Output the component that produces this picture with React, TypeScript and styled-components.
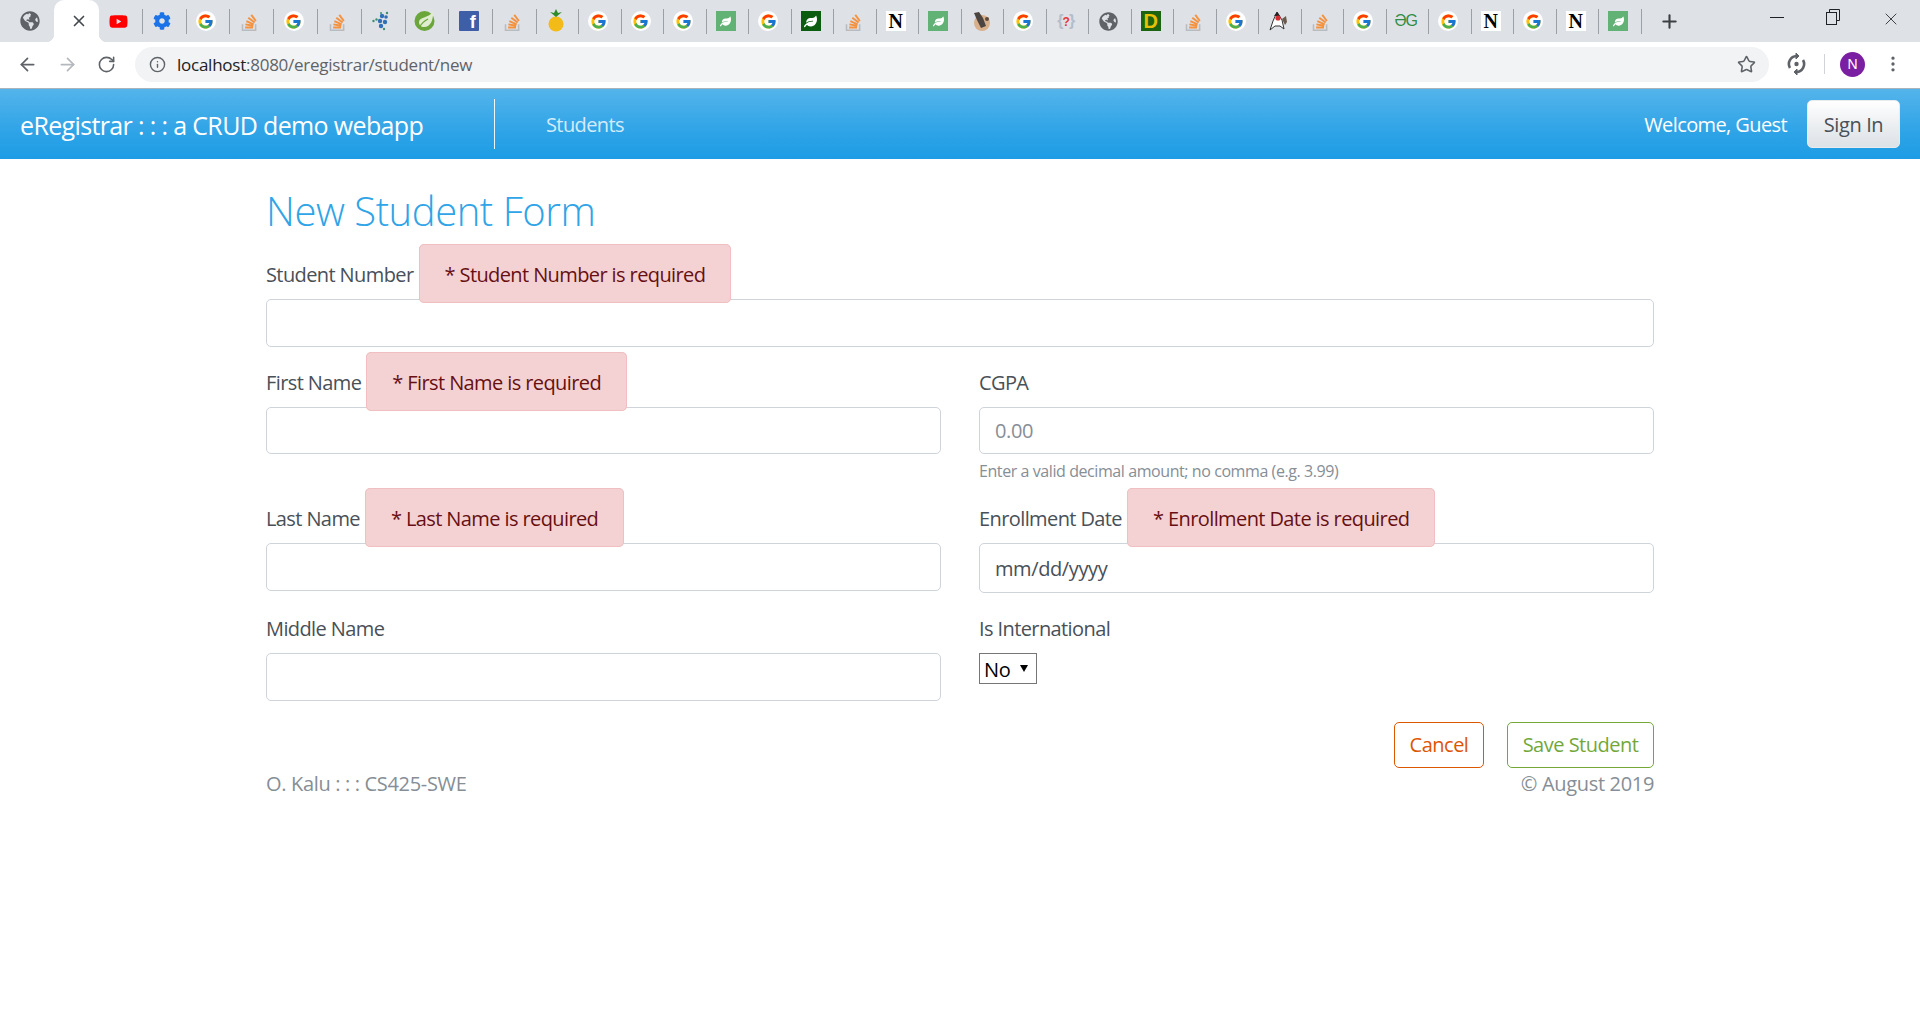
import React from 'react';
import styled, { createGlobalStyle } from 'styled-components';
import { ArrowLeft, ArrowRight, RotateCw, Info, Star, X, Plus, EllipsisVertical } from 'lucide-react';
import { FaGlobeAmericas, FaYoutube, FaCog, FaLeaf } from 'react-icons/fa';
import { FcGoogle } from 'react-icons/fc';

const GlobalStyle = createGlobalStyle`
  html, body {
    margin: 0;
    background: #fff;
  }
  body {
    font-family: "Open Sans", "Noto Sans", "Liberation Sans", sans-serif;
    color: #495057;
  }
  * {
    box-sizing: border-box;
  }
`;

const TabStrip = styled.div`
  height: 42px;
  background: #dee1e6;
  display: flex;
  align-items: center;
`;

const FirstTab = styled.div`
  width: 54px;
  height: 42px;
  padding-left: 20px;
  display: flex;
  align-items: center;
  color: #5f6368;
`;

const ActiveTab = styled.div`
  position: relative;
  width: 45px;
  height: 42px;
  padding-left: 4px;
  background: #fff;
  border-radius: 10px 10px 0 0;
  display: flex;
  align-items: center;
  justify-content: center;
  color: #45494d;

  &::before,
  &::after {
    content: '';
    position: absolute;
    bottom: 0;
    width: 8px;
    height: 8px;
  }
  &::before {
    left: -8px;
    background: radial-gradient(circle at 0 0, #dee1e6 8px, #fff 8.5px);
  }
  &::after {
    right: -8px;
    background: radial-gradient(circle at 100% 0, #dee1e6 8px, #fff 8.5px);
  }
`;

const Tab = styled.div<{ $wide?: boolean }>`
  width: ${(p) => (p.$wide ? 43.8 : 42.5)}px;
  height: 25px;
  flex: none;
  padding-right: 4px;
  display: flex;
  align-items: center;
  justify-content: center;
  border-right: 1px solid #9aa0a6;
`;

const NewTab = styled.div`
  width: 42px;
  padding-left: 14px;
  display: flex;
  justify-content: center;
  color: #3c4043;
`;

const GoogleBadge = styled.span`
  width: 20px;
  height: 20px;
  border-radius: 50%;
  background: #fff;
  display: flex;
  align-items: center;
  justify-content: center;
`;

const NotionTile = styled.span`
  width: 20px;
  height: 20px;
  background: #fff;
  color: #000;
  font: bold 20px/20px "Liberation Serif", serif;
  text-align: center;
`;

const FacebookTile = styled.span`
  width: 20px;
  height: 20px;
  padding: 2px 3px 0 0;
  background: #3f5ea8;
  border-radius: 1px;
  color: #fff;
  font: bold 18px/18px "Liberation Sans", sans-serif;
  text-align: right;
`;

const LeafTile = styled.span<{ $dark?: boolean }>`
  width: 20px;
  height: 20px;
  background: ${(p) => (p.$dark ? '#0b5c0f' : '#62b175')};
  color: #fff;
  display: flex;
  align-items: center;
  justify-content: center;
`;

const DomainTile = styled.span`
  width: 20px;
  height: 20px;
  background: #1c6410;
  color: #e8bf06;
  font: bold 20px/20px "Liberation Sans", sans-serif;
  text-align: center;
`;

const GeekMark = styled.span`
  color: #2f8d46;
  font: 16px/20px "Liberation Sans", sans-serif;
  letter-spacing: -1px;
`;

const BraceMark = styled.span`
  color: #b4bdcb;
  font: bold 16px/20px "Liberation Sans", sans-serif;
  letter-spacing: -1px;
`;

const BraceQuestion = styled.span`
  color: #e53935;
  font-size: 12px;
`;

const WindowButtons = styled.div`
  margin-left: auto;
  width: 150px;
  display: flex;
  justify-content: space-between;
  padding: 0 19px 4px 0;
  color: #202124;
`;

const Toolbar = styled.div`
  height: 47px;
  background: #fff;
  border-bottom: 1px solid #aab2ba;
  display: flex;
  align-items: center;
  padding: 0 17px 2px 17px;
  color: #5f6368;
`;

const ToolIcon = styled.span<{ $width: number }>`
  width: ${(p) => p.$width}px;
  flex: none;
  display: flex;
`;

const Omnibox = styled.div`
  flex: 1;
  height: 35px;
  padding: 0 13px 0 14px;
  background: #f1f3f4;
  border-radius: 18px;
  display: flex;
  align-items: center;
  font: 17px "Open Sans", sans-serif;
  letter-spacing: -0.25px;
`;

const UrlHost = styled.span`
  margin-left: 11px;
  color: #202124;
`;

const UrlPath = styled.span`
  flex: 1;
  color: #5f6368;
`;

const ToolbarDivider = styled.span`
  width: 1px;
  height: 20px;
  background: #d0d3d7;
  margin: 0 15px 0 18px;
`;

const Avatar = styled.span`
  width: 25px;
  height: 25px;
  border-radius: 50%;
  background: #7b1fa2;
  color: #fff;
  font: 14px/25px "Liberation Sans", sans-serif;
  text-align: center;
`;

const NavBar = styled.nav`
  height: 70px;
  padding: 0 20px;
  background: linear-gradient(#54b4eb, #2fa4e7 60%, #1d9ce5);
  display: flex;
  align-items: center;
`;

const Brand = styled.a`
  width: 474px;
  margin-top: 2px;
  color: #fff;
  font-size: 25px;
  letter-spacing: -0.65px;
`;

const NavDivider = styled.span`
  width: 1px;
  height: 50px;
  background: #fff;
  opacity: 0.9;
`;

const NavLink = styled.a`
  margin-left: 51px;
  color: rgba(255, 255, 255, 0.8);
  font-size: 20px;
  letter-spacing: -0.6px;
`;

const Welcome = styled.span`
  margin-left: auto;
  margin-right: 20px;
  color: #fff;
  font-size: 20px;
  letter-spacing: -0.6px;
`;

const SignIn = styled.button`
  width: 93px;
  height: 48px;
  border: 1px solid #e9ecef;
  border-radius: 5px;
  background: linear-gradient(#fff, #e9ecef 60%, #dde2e6);
  color: #495057;
  font: 20px "Open Sans", sans-serif;
  letter-spacing: -0.4px;
`;

const Page = styled.main`
  width: 1388px;
  margin: 0 auto;
  padding-top: 28px;
`;

const Heading = styled.h2`
  margin: 0 0 25px;
  color: #2fa4e7;
  font-size: 40px;
  font-weight: 300;
  line-height: 48px;
  letter-spacing: -0.45px;
`;

const FormGrid = styled.div`
  display: grid;
  grid-template-columns: 1fr 1fr;
  column-gap: 38px;
`;

const FormGroup = styled.div<{ $wide?: boolean }>`
  grid-column: ${(p) => (p.$wide ? '1 / span 2' : 'auto')};
  margin-bottom: 21px;
`;

const Label = styled.label`
  display: block;
  margin-bottom: 9px;
  font-size: 20px;
  line-height: 30px;
  letter-spacing: -0.6px;
`;

const ErrorTag = styled.span`
  position: relative;
  margin-left: 5px;
  padding: 16px 25px 14px;
  background: #f4d2d3;
  border: 1px solid #efbfc1;
  border-radius: 5px;
  color: #670f12;
`;

const Input = styled.input<{ $date?: boolean }>`
  display: block;
  width: 100%;
  height: ${(p) => (p.$date ? 50 : 47.5)}px;
  padding: 0 15px;
  border: 1px solid #ced4da;
  border-radius: 5px;
  background: #fff;
  color: #495057;
  font: 20px "Open Sans", sans-serif;
  letter-spacing: -0.4px;
  &::placeholder {
    color: #868e96;
  }
`;

const HelpText = styled.small`
  display: block;
  margin-top: 5px;
  color: #868e96;
  font-size: 16px;
  line-height: 24px;
  letter-spacing: -0.42px;
`;

const SelectBox = styled.div`
  position: relative;
  width: 58px;

  &::after {
    content: '';
    position: absolute;
    left: 41px;
    top: 12px;
    border-style: solid;
    border-width: 7px 4px 0;
    border-color: #000 transparent transparent;
    pointer-events: none;
  }
`;

const Select = styled.select`
  display: block;
  width: 58px;
  height: 31px;
  padding: 1px 0 0 4px;
  appearance: none;
  background: #fff;
  border: 1px solid #767676;
  border-radius: 0;
  color: #000;
  font: 20px "Open Sans", sans-serif;
  letter-spacing: -0.4px;
`;

const Actions = styled.div`
  display: flex;
  justify-content: flex-end;
  gap: 23px;
`;

const OutlineButton = styled.button<{ $color: string; $width: number }>`
  width: ${(p) => p.$width}px;
  height: 46px;
  background: #fff;
  border: 1px solid ${(p) => p.$color};
  border-radius: 5px;
  color: ${(p) => p.$color};
  font: 20px "Open Sans", sans-serif;
  letter-spacing: -0.5px;
`;

const Footer = styled.footer`
  display: flex;
  justify-content: space-between;
  margin-top: 1px;
  color: #868e96;
  font-size: 20px;
  line-height: 30px;
  letter-spacing: -0.33px;
`;

const StackIcon = () => (
  <svg width="21" height="21" viewBox="0 0 24 24" fill="none">
    <path d="M4 15v7h15v-7" stroke="#b9bcbf" strokeWidth="1.8" />
    <path
      d="M7 18.8h9M7.3 15.3l9 1.6M8.4 11.5l8.4 3.7M10.6 7.6l7.3 5.6M14 4.4l5.3 7"
      stroke="#f4923f"
      strokeWidth="2.2"
    />
  </svg>
);

const DotsIcon = () => (
  <svg width="20" height="22" viewBox="0 0 20 22">
    <g fill="#2f6fb7">
      <circle cx="11" cy="6" r="2.2" />
      <circle cx="15" cy="7" r="1.8" />
      <circle cx="9" cy="11" r="2.2" />
      <circle cx="14" cy="12" r="2.2" />
      <circle cx="10" cy="16" r="2.2" />
    </g>
    <g fill="#3f8f6f">
      <circle cx="2.5" cy="11" r="1.2" />
      <circle cx="5.5" cy="9.5" r="1.2" />
      <circle cx="16" cy="3" r="1.2" />
      <circle cx="13" cy="19" r="1.2" />
      <circle cx="10" cy="3" r="1" />
    </g>
  </svg>
);

const SpringIcon = () => (
  <svg width="21" height="22" viewBox="0 0 21 22">
    <circle cx="10.5" cy="11" r="10" fill="#6aa63a" />
    <path d="M19 2c.5 7-2 15-9 15-3 0-5-2-5-5 0-5 9-4 14-10z" fill="#dfeccf" />
    <path d="M5 18c2-4 5-7 9-9" stroke="#6aa63a" strokeWidth="1.2" fill="none" />
  </svg>
);

const PineappleIcon = () => (
  <svg width="18" height="24" viewBox="0 0 18 24">
    <circle cx="9" cy="15" r="7.5" fill="#f2bb18" />
    <path d="M9 8 3 3l4 1 2-4 2 4 4-1z" fill="#2f8a2a" />
  </svg>
);

const PuppyIcon = () => (
  <svg width="20" height="22" viewBox="0 0 20 22">
    <circle cx="11" cy="13" r="8" fill="#d9b08c" />
    <path d="M3 3l5-1 4 6 3 8-5 2-4-8z" fill="#4b4440" />
    <circle cx="16" cy="9" r="2" fill="#5b4a3f" />
  </svg>
);

const DukeIcon = () => (
  <svg width="21" height="22" viewBox="0 0 21 22">
    <path d="M9 2 14 10l2 9-4-3H7l-5 4 3-9z" fill="#fff" stroke="#333" />
    <path d="M9 2 12 6H6z" fill="#222" />
    <circle cx="10" cy="8" r="2.6" fill="#d32f2f" />
    <path d="M14 9l4-3 1 6-2 3z" fill="#6b5a4b" />
  </svg>
);

const SyncIcon = () => (
  <svg width="19" height="22" viewBox="0 0 19 22" fill="none" stroke="#5f6368" strokeWidth="2.6">
    <path d="M3 15A8 8 0 0 1 9.5 3" />
    <path d="M16 7a8 8 0 0 1-6.5 12" />
    <path d="M9 0v6l3-3zM10 22v-6l-3 3z" fill="#5f6368" strokeWidth="1" />
    <circle cx="9.5" cy="11" r="2.2" fill="#5f6368" stroke="none" />
  </svg>
);

const RestoreIcon = () => (
  <svg width="14" height="16" viewBox="0 0 14 16" fill="none" stroke="#202124" strokeWidth="1">
    <rect x="0.5" y="3.5" width="10" height="12" />
    <path d="M3.5 3.5v-3h10v11h-3" />
  </svg>
);

const MinimizeIcon = () => (
  <svg width="14" height="16" viewBox="0 0 14 16" stroke="#202124" strokeWidth="1">
    <path d="M0 8.5h14" />
  </svg>
);

const google = <GoogleBadge><FcGoogle size={17} /></GoogleBadge>;
const stack = <StackIcon />;
const notion = <NotionTile>N</NotionTile>;
const leaf = <LeafTile><FaLeaf size={11} /></LeafTile>;

const tabs: React.ReactNode[] = [
  <FaYoutube size={19} color="#f00" />,
  <FaCog size={18} color="#1a73e8" />,
  google,
  stack,
  google,
  stack,
  <DotsIcon />,
  <SpringIcon />,
  <FacebookTile>f</FacebookTile>,
  stack,
  <PineappleIcon />,
  google,
  google,
  google,
  leaf,
  google,
  <LeafTile $dark><FaLeaf size={13} /></LeafTile>,
  stack,
  notion,
  leaf,
  <PuppyIcon />,
  google,
  <BraceMark>{'{'}<BraceQuestion>?</BraceQuestion>{'}'}</BraceMark>,
  <FaGlobeAmericas size={19} color="#5f6368" />,
  <DomainTile>D</DomainTile>,
  stack,
  google,
  <DukeIcon />,
  stack,
  google,
  <GeekMark>ƏG</GeekMark>,
  google,
  notion,
  google,
  notion,
  leaf,
];

const App = () => (
  <>
    <GlobalStyle />
    <TabStrip>
      <FirstTab><FaGlobeAmericas size={20} /></FirstTab>
      <ActiveTab><X size={18} strokeWidth={2.2} /></ActiveTab>
      {tabs.map((icon, i) => (
        <Tab key={i} $wide={i < 10}>{icon}</Tab>
      ))}
      <NewTab><Plus size={21} strokeWidth={2.4} /></NewTab>
      <WindowButtons>
        <MinimizeIcon />
        <RestoreIcon />
        <X size={20} strokeWidth={1} />
      </WindowButtons>
    </TabStrip>
    <Toolbar>
      <ToolIcon $width={40}><ArrowLeft size={21} /></ToolIcon>
      <ToolIcon $width={40}><ArrowRight size={21} color="#b5b8bc" /></ToolIcon>
      <ToolIcon $width={38}><RotateCw size={19} /></ToolIcon>
      <Omnibox>
        <Info size={17} />
        <UrlHost>localhost</UrlHost>
        <UrlPath>:8080/eregistrar/student/new</UrlPath>
        <Star size={19} />
      </Omnibox>
      <ToolIcon $width={18} />
      <SyncIcon />
      <ToolbarDivider />
      <Avatar>N</Avatar>
      <ToolIcon $width={18} />
      <EllipsisVertical size={20} />
    </Toolbar>
    <NavBar>
      <Brand>eRegistrar : : : a CRUD demo webapp</Brand>
      <NavDivider />
      <NavLink>Students</NavLink>
      <Welcome>Welcome, Guest</Welcome>
      <SignIn>Sign In</SignIn>
    </NavBar>
    <Page>
      <Heading>New Student Form</Heading>
      <FormGrid>
        <FormGroup $wide>
          <Label>Student Number<ErrorTag>* Student Number is required</ErrorTag></Label>
          <Input />
        </FormGroup>
        <FormGroup>
          <Label>First Name<ErrorTag>* First Name is required</ErrorTag></Label>
          <Input />
        </FormGroup>
        <FormGroup>
          <Label>CGPA</Label>
          <Input placeholder="0.00" />
          <HelpText>Enter a valid decimal amount; no comma (e.g. 3.99)</HelpText>
        </FormGroup>
        <FormGroup>
          <Label>Last Name<ErrorTag>* Last Name is required</ErrorTag></Label>
          <Input />
        </FormGroup>
        <FormGroup>
          <Label>Enrollment Date<ErrorTag>* Enrollment Date is required</ErrorTag></Label>
          <Input $date defaultValue="mm/dd/yyyy" />
        </FormGroup>
        <FormGroup>
          <Label>Middle Name</Label>
          <Input />
        </FormGroup>
        <FormGroup>
          <Label>Is International</Label>
          <SelectBox>
            <Select defaultValue="No">
              <option>No</option>
              <option>Yes</option>
            </Select>
          </SelectBox>
        </FormGroup>
      </FormGrid>
      <Actions>
        <OutlineButton $color="#dd5600" $width={90}>Cancel</OutlineButton>
        <OutlineButton $color="#73a839" $width={147}>Save Student</OutlineButton>
      </Actions>
      <Footer>
        <span>O. Kalu : : : CS425-SWE</span>
        <span>© August 2019</span>
      </Footer>
    </Page>
  </>
);

export default App;
